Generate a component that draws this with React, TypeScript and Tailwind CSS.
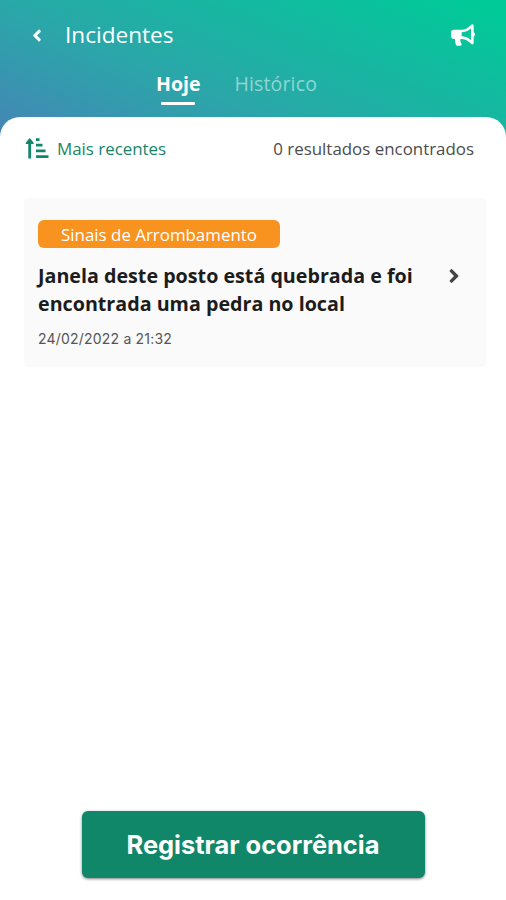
import { FaAngleLeft, FaAngleRight, FaBullhorn } from "react-icons/fa";

interface Incident {
  id: number;
  kind: string;
  title: string;
  date: string;
}

const incidents: Incident[] = [
  {
    id: 1,
    kind: "Sinais de Arrombamento",
    title: "Janela deste posto está quebrada e foi encontrada uma pedra no local",
    date: "24/02/2022 a 21:32",
  },
];

export default function App() {
  return (
    <div className="w-full h-screen flex flex-col overflow-hidden font-['Open_Sans',sans-serif] bg-[linear-gradient(22deg,#4684b6_0%,#2ba6a9_38%,#00ca98_96%)] bg-[length:100%_140px] bg-no-repeat">
      <Header />
      <main className="flex-1 bg-white rounded-t-[20px] flex flex-col">
        <Toolbar />
        <div className="pl-6 pr-5 mt-[37px] flex-1">
          {incidents.map((item) => (
            <IncidentCard key={item.id} item={item} />
          ))}
        </div>
        <button className="mx-auto mb-[22px] w-[343px] h-[67px] rounded-[6px] bg-[#108768] shadow-[0_1px_3px_rgba(0,0,0,0.5)] text-white font-bold text-[25.4px] font-[Inter,sans-serif] pt-[2px]">
          Registrar ocorrência
        </button>
      </main>
    </div>
  );
}

function Header() {
  return (
    <header className="h-[117px] text-white">
      <div className="flex items-center h-[70px] pl-[31px] pr-[31px]">
        <FaAngleLeft className="w-3 h-[19px]" />
        <h1 className="ml-[22px] text-[22.6px]">Incidentes</h1>
        <FaBullhorn className="ml-auto w-[24px] h-[22px]" />
      </div>
      <nav className="flex pl-[156px] gap-[34px] text-[19.5px] leading-[27px]">
        <div className="flex flex-col items-center">
          <span className="font-bold">Hoje</span>
          <div className="w-[34px] h-[3px] bg-white mt-[5px] rounded-[1px]" />
        </div>
        <span className="text-white/50 tracking-[0.15px]">Histórico</span>
      </nav>
    </header>
  );
}

function Toolbar() {
  return (
    <div className="flex items-center h-[44px] pt-[20px] pl-[25px] pr-[32px] text-[16.9px]">
      <SortIcon />
      <span className="ml-[8px] text-[#178568]">Mais recentes</span>
      <span className="ml-auto text-[#4c4c4c]">0 resultados encontrados</span>
    </div>
  );
}

function SortIcon() {
  return (
    <svg width="24" height="22" viewBox="0 0 24 22" fill="none" stroke="#108768" strokeWidth="2.8">
      <path d="M4.700 20.500V4M11 1.600h3.500M11 7.200h6.500M11 12.900h9.500M11 18.600h12.500" />
      <path d="M4.700 1L8 5.200H1.400z" fill="#108768" strokeWidth="1.500" strokeLinejoin="round" />
    </svg>
  );
}

function IncidentCard({ item }: { item: Incident }) {
  return (
    <div className="h-[169px] rounded-[4px] bg-[#fafafa] pt-[22px] pl-[14px] pr-[25px]">
      <div className="w-[242px] h-[28px] rounded-[6px] bg-[#f8931f] text-white text-[16.9px] pt-px flex items-center justify-center">
        {item.kind}
      </div>
      <div className="flex mt-[14px]">
        <h2 className="w-[385px] text-[19.7px] leading-[28px] font-bold text-[#1c1c1c]">{item.title}</h2>
        <FaAngleRight className="ml-auto mt-[3px] w-[14px] h-[22px] text-[#444]" />
      </div>
      <p className="mt-[10px] text-[14px] tracking-[0.2px] leading-[21px] text-[#555] font-[Inter,sans-serif]">{item.date}</p>
    </div>
  );
}
